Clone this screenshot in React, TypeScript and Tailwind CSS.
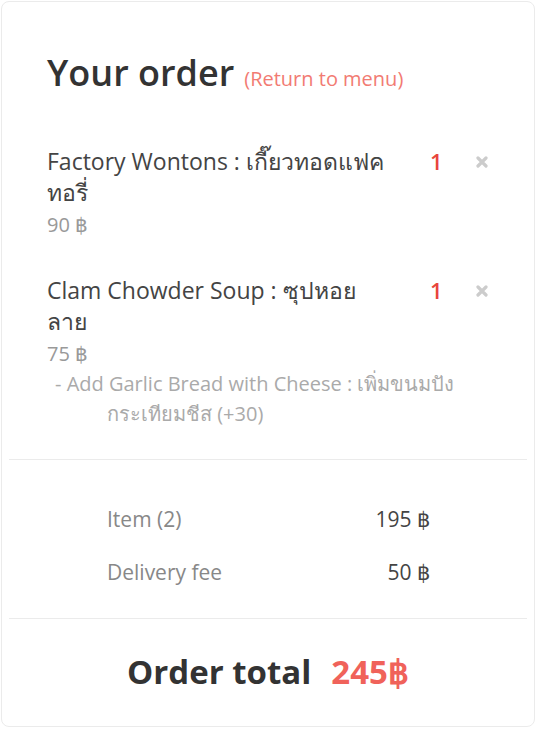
const font = { fontFamily: '"Open Sans", "Noto Sans", sans-serif' };

type Item = {
  name: string;
  price: number;
  qty: number;
  options: string[];
};

const items: Item[] = [
  { name: "Factory Wontons : เกี๊ยวทอดแฟคทอรี่", price: 90, qty: 1, options: [] },
  {
    name: "Clam Chowder Soup : ซุปหอยลาย",
    price: 75,
    qty: 1,
    options: ["Add Garlic Bread with Cheese : เพิ่มขนมปังกระเทียมชีส (+30)"],
  },
];

function RemoveIcon() {
  return (
    <svg width="12" height="12" viewBox="0 0 12 12">
      <path d="M2 2 L10 10 M10 2 L2 10" stroke="#cccccc" strokeWidth="3.2" strokeLinecap="round" />
    </svg>
  );
}

export default function App() {
  return (
    <div className="bg-white pt-px" style={font}>
      <div className="ml-px w-[534px] h-[726px] border border-[#ebebeb] rounded-lg bg-white px-[7px] flex flex-col">
        {/* header */}
        <div className="px-[38px] pt-[49px] flex items-baseline gap-[10px]">
          <h1 className="text-[36px] leading-[44px] font-semibold text-[#333]">Your order</h1>
          <a className="text-[20px] text-[#f27b73]">(Return to menu)</a>
        </div>

        {/* items */}
        <ul className="px-[38px] mt-[51px] pb-[30px] flex flex-col gap-[35px]">
          {items.map((item) => (
            <li key={item.name}>
              <div className="flex items-start">
                <div className="w-[342px] mr-[41px] shrink-0">
                  <p className="text-[23px] leading-[31px] text-[#444]">{item.name}</p>
                  <p className="mt-[2px] text-[20px] leading-[30px] text-[#999]">{item.price} ฿</p>
                </div>
                <span className="w-[46px] text-[22px] leading-[31px] font-semibold text-[#e8453c]">
                  {item.qty}
                </span>
                <button className="mt-[10px]">
                  <RemoveIcon />
                </button>
              </div>
              {item.options.map((opt) => (
                <p
                  key={opt}
                  className="pl-[60px] -indent-[52px] w-[450px] text-[20px] leading-[30px] text-[#aaa] font-medium"
                >
                  - {opt}
                </p>
              ))}
            </li>
          ))}
        </ul>

        <div className="border-t border-[#ebebeb]" />

        {/* summary */}
        <div className="pl-[98px] pr-[97px] pt-[44px] pb-[31px] flex flex-col gap-[23px]">
          <div className="flex justify-between text-[21px] leading-[30px]">
            <span className="text-[#888]">Item (2)</span>
            <span className="text-[#444]">195 ฿</span>
          </div>
          <div className="flex justify-between text-[21px] leading-[30px]">
            <span className="text-[#888]">Delivery fee</span>
            <span className="text-[#444]">50 ฿</span>
          </div>
        </div>

        <div className="border-t border-[#ebebeb]" />

        {/* total */}
        <div className="pt-[33px] flex justify-center gap-[20px]">
          <span className="text-[33px] leading-[40px] font-bold text-[#333]">Order total</span>
          <span className="text-[33px] leading-[40px] font-bold text-[#f0625a]">245฿</span>
        </div>
      </div>
    </div>
  );
}
